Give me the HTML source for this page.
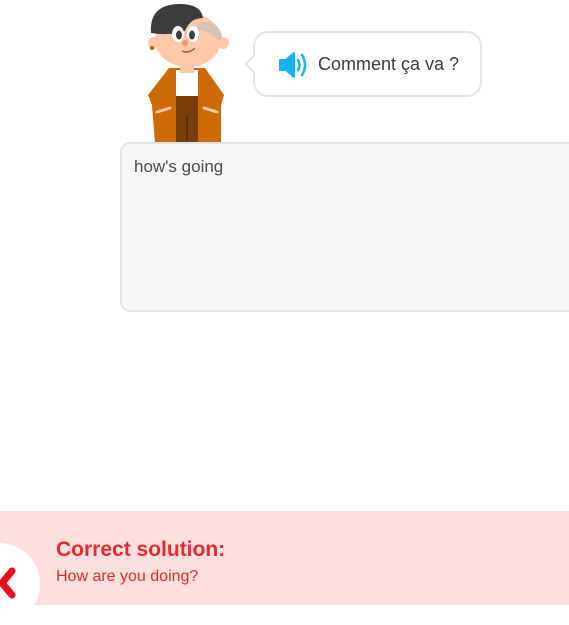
<!DOCTYPE html>
<html><head><meta charset="utf-8"><style>
body{margin:0;width:569px;height:605px;overflow:hidden;background:#fff;font-family:"Liberation Sans",sans-serif;position:relative}
.bubble{position:absolute;left:253px;top:31px;width:225px;height:62px;border:2px solid #e5e5e5;border-radius:15px;box-sizing:content-box;background:#fff}
.bubble:before{content:"";position:absolute;left:-8px;top:24px;width:12px;height:12px;background:#fff;border-left:2px solid #e5e5e5;border-bottom:2px solid #e5e5e5;transform:rotate(45deg)}
.bt{position:absolute;left:63px;top:21px;font-size:18px;color:#3c3c3c}
.ta{position:absolute;left:120px;top:142px;width:470px;height:166px;background:#f7f7f7;border:2px solid #e5e5e5;border-radius:10px}
.ta span{position:absolute;left:12px;top:13px;font-size:17px;color:#4b4b4b}
.bar{position:absolute;left:0;top:511px;width:569px;height:94px;background:#ffdfe0}
.circ{position:absolute;left:-42px;top:32px;width:82px;height:82px;border-radius:50%;background:#fff}
.h{position:absolute;left:56px;top:27px;font-size:21px;font-weight:bold;color:#ea2b2b}
.s{position:absolute;left:56px;top:57px;font-size:16px;color:#ea2b2b}
</style></head><body>
<svg style="position:absolute;left:145px;top:0" width="85" height="143" viewBox="0 0 85 143">
<path d="M3 95 L24 68 L60 68 L79 95 L76 105 L76 143 L10 143 L7 105 Z" fill="#cc6a04"/>
<rect x="31" y="70" width="22" height="27" fill="#fff"/>
<rect x="31" y="96" width="22" height="47" fill="#7a3f08"/>
<line x1="42" y1="115" x2="42" y2="143" stroke="#5a2e05" stroke-width="2"/>
<path d="M12 112 L25 108 M72 112 L59 108" stroke="#ffc8a8" stroke-width="3" stroke-linecap="round"/>
<rect x="35" y="55" width="14" height="18" fill="#ffc8a8"/>
<circle cx="9" cy="43" r="6" fill="#ffc8a8"/><circle cx="78" cy="43" r="6" fill="#ffc8a8"/>
<ellipse cx="43" cy="40" rx="33" ry="27" fill="#ffc8a8"/>
<path d="M52 24 Q70 16 77 35 L76 42 Q60 28 52 30 Z" fill="#d5c4b5"/>
<path d="M6 33 Q4 4 35 4 Q56 4 58 18 Q45 18 40 31 Q25 36 6 33 Z" fill="#3c3c3c"/>
<ellipse cx="33" cy="34" rx="6" ry="8" fill="#fff"/><ellipse cx="48" cy="34" rx="6" ry="8" fill="#fff"/>
<ellipse cx="34" cy="35" rx="3" ry="4.5" fill="#3c3c3c"/><ellipse cx="47" cy="35" rx="3" ry="4.5" fill="#3c3c3c"/>
<ellipse cx="40" cy="43" rx="3" ry="3" fill="#e9957a"/>
<path d="M37 51 Q44 54 50 48" stroke="#a85a3a" stroke-width="1.5" fill="none"/>
<circle cx="7" cy="48" r="2" fill="#cc5500"/>
</svg>
<div class="bubble">
<svg style="position:absolute;left:23px;top:18px" width="30" height="28" viewBox="0 0 30 28">
<path d="M2 9 L8 9 L16 2 L16 26 L8 19 L2 19 Z" fill="#1cb0f6" stroke="#1cb0f6" stroke-width="2" stroke-linejoin="round"/>
<path d="M20 9 Q23 14 20 19" stroke="#1cb0f6" stroke-width="2.5" fill="none" stroke-linecap="round"/>
<path d="M24 4 Q30 14 24 24" stroke="#1cb0f6" stroke-width="2.5" fill="none" stroke-linecap="round"/>
</svg>
<span class="bt">Comment ça va ?</span></div>
<div class="ta"><span>how's going</span></div>
<div class="bar"><div class="circ"></div>
<svg style="position:absolute;left:0;top:56px" width="20" height="32" viewBox="0 0 20 32"><path d="M12 4 L2 16 L12 28" stroke="#ea0f1f" stroke-width="7" fill="none" stroke-linecap="round" stroke-linejoin="round"/></svg>
<div class="h">Correct solution:</div><div class="s">How are you doing?</div></div>
</body></html>
